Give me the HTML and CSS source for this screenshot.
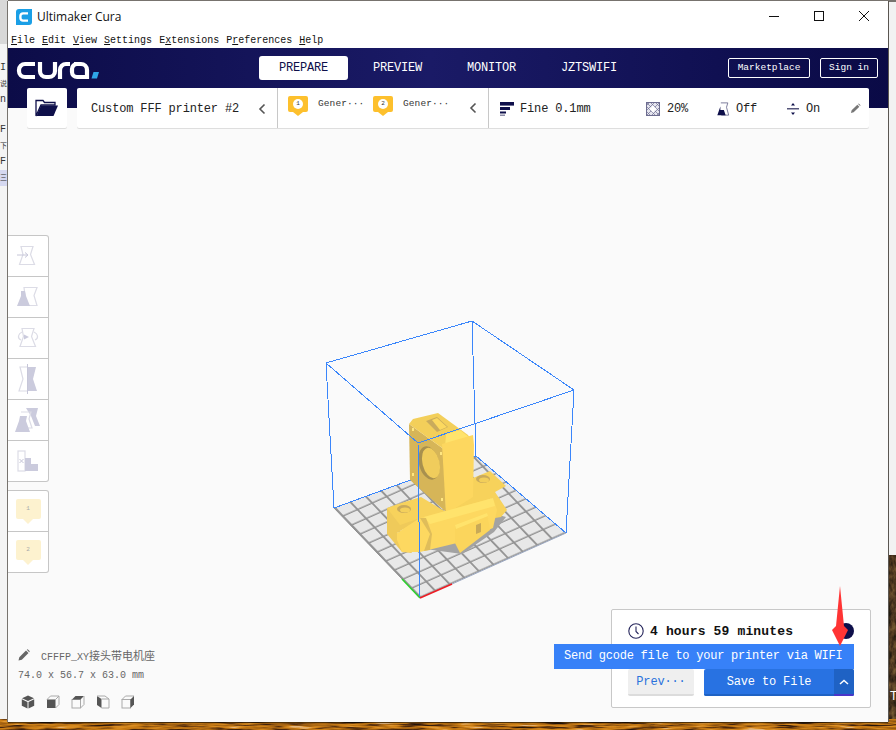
FILE: index.html
```html
<!DOCTYPE html>
<html lang="en">
<head>
<meta charset="utf-8">
<title>Ultimaker Cura</title>
<link rel="stylesheet" href="styles.css">
</head>
<body>
<svg class="desktop-art" viewBox="0 0 896 730" aria-hidden="true">
  <defs>
    <filter id="wood" x="0" y="0" width="100%" height="100%" color-interpolation-filters="sRGB">
      <feTurbulence type="fractalNoise" baseFrequency="0.035 0.45" numOctaves="3" seed="7"/>
      <feColorMatrix type="matrix" values="1.6 0 0 0 -0.3 1.6 0 0 0 -0.3 1.6 0 0 0 -0.3 0 0 0 0 1"/>
      <feComponentTransfer>
        <feFuncR type="table" tableValues="0.14 0.32 0.62 0.78 0.86 0.9"/>
        <feFuncG type="table" tableValues="0.08 0.17 0.37 0.48 0.56 0.72"/>
        <feFuncB type="table" tableValues="0.04 0.05 0.07 0.08 0.14 0.5"/>
      </feComponentTransfer>
    </filter>
    <filter id="bark" x="0" y="0" width="100%" height="100%" color-interpolation-filters="sRGB">
      <feTurbulence type="fractalNoise" baseFrequency="0.25 0.12" numOctaves="3" seed="3"/>
      <feColorMatrix type="matrix" values="1.6 0 0 0 -0.3 1.6 0 0 0 -0.3 1.6 0 0 0 -0.3 0 0 0 0 1"/>
      <feComponentTransfer>
        <feFuncR type="table" tableValues="0.12 0.24 0.36 0.46"/>
        <feFuncG type="table" tableValues="0.1 0.17 0.26 0.36"/>
        <feFuncB type="table" tableValues="0.06 0.1 0.15 0.2"/>
      </feComponentTransfer>
    </filter>
  </defs>
  <rect x="0" y="0" width="896" height="730" fill="#ececec"/>
  <rect x="0" y="0" width="896" height="2" fill="#77736e"/>
  <rect x="0" y="0" width="8" height="44" fill="#d8d8d8"/>
  <rect x="0" y="44" width="8" height="686" fill="#f4f4f4"/>
  <rect x="888" y="2" width="8" height="553" fill="#f2f2f2"/>
  <rect x="885" y="555" width="11" height="175" filter="url(#bark)"/>
  <rect x="0" y="719" width="896" height="11" filter="url(#wood)"/>
</svg>

<div class="left-scrap">
  <span class="scrap-line">I</span>
  <span class="scrap-line scrap-cjk">说</span>
  <span class="scrap-line">n</span>
  <span class="scrap-gap"></span>
  <span class="scrap-line">F</span>
  <span class="scrap-line scrap-cjk">下</span>
  <span class="scrap-line">F</span>
  <span class="scrap-line scrap-cjk scrap-sel">三</span>
</div>
<span class="right-scrap">T</span>

<main class="window">
  <div class="titlebar">
    <svg class="app-icon" viewBox="0 0 16 16" aria-hidden="true">
      <path d="M3 0h13v13a3 3 0 0 1-3 3H0V3a3 3 0 0 1 3-3z" fill="#1a9fe6"/>
      <path d="M12 4.400H7a2.600 2.600 0 0 0-2.600 2.600v2A2.600 2.600 0 0 0 7 11.600h5" fill="none" stroke="#fff" stroke-width="2.400"/>
    </svg>
    <span class="app-title">Ultimaker Cura</span>
    <div class="win-controls">
      <svg class="win-btn" viewBox="0 0 12 12" aria-hidden="true"><path d="M1 6.500h10" stroke="#111" fill="none"/></svg>
      <svg class="win-btn" viewBox="0 0 12 12" aria-hidden="true"><rect x="1.500" y="1.500" width="9" height="9" stroke="#111" fill="none"/></svg>
      <svg class="win-btn" viewBox="0 0 12 12" aria-hidden="true"><path d="M1 1l10 10M11 1L1 11" stroke="#111" fill="none"/></svg>
    </div>
  </div>

  <nav class="menubar">
    <span class="menu-item"><u>F</u>ile</span>
    <span class="menu-item"><u>E</u>dit</span>
    <span class="menu-item"><u>V</u>iew</span>
    <span class="menu-item"><u>S</u>ettings</span>
    <span class="menu-item">E<u>x</u>tensions</span>
    <span class="menu-item">P<u>r</u>eferences</span>
    <span class="menu-item"><u>H</u>elp</span>
  </nav>

  <header class="header">
    <svg class="logo" viewBox="0 0 84 20" aria-label="cura logo" role="img">
      <g fill="none" stroke="#fff" stroke-width="4.200">
        <path d="M19 4H9a6 6 0 0 0-6 6v1a6 6 0 0 0 6 6h10"/>
        <path d="M24 2v9a6 6 0 0 0 6 6h3a6 6 0 0 0 6-6V2"/>
        <path d="M44 19V10a6 6 0 0 1 6-6h4"/>
        <path d="M58 4h7a6 6 0 0 1 6 6v7h-10a5 5 0 0 1-5-5v-3a5 5 0 0 1 5-5"/>
      </g>
      <polygon points="77.500,12 83,12 81,18.500 75.500,18.500" fill="#2ea6e8"/>
    </svg>
    <div class="tabs">
      <span class="tab tab-active">PREPARE</span>
      <span class="tab">PREVIEW</span>
      <span class="tab">MONITOR</span>
      <span class="tab">JZTSWIFI</span>
    </div>
    <div class="account">
      <span class="acct-btn acct-market">Marketplace</span>
      <span class="acct-btn acct-sign">Sign in</span>
    </div>
  </header>

  <section class="stage">
    <svg class="scene" viewBox="8 108 880 614" aria-hidden="true">
      <defs>
        <pattern id="plate" width="10" height="10" patternUnits="userSpaceOnUse" patternTransform="matrix(1.46 -0.65 -0.86 -0.9 420 598)">
          <rect width="10" height="10" fill="#e8e8e8"/>
          <rect x="0" y="0" width="10" height="1.200" fill="#939393"/>
          <rect x="0" y="0" width="1.200" height="10" fill="#939393"/>
        </pattern>
      </defs>
      <polygon points="334,508 476,456 566,533 420,598" fill="url(#plate)"/>
      <g class="box-line">
        <path d="M326 363L472 321L574 390M472 321L476 456M334 508L476 456L566 533"/>
        <path d="M326 363L334 508M574 390L566 533"/>
      </g>
      <polygon points="418,548 462,554 494,532 506,517 495,514 440,540" fill="#a3a3a3"/>
      <!-- tower -->
      <polygon points="409,424 445,450 446,512 410,480" fill="#d6b558"/>
      <polygon points="409,424 413,419 438,413 468,435 473,443 445,450" fill="#f3cf5a"/>
      <polygon points="426,421 437,417 448,427 437,432" fill="#c9ab5c"/>
      <polygon points="432,420 437,418 447,427 440,430" fill="#fcd95f"/>
      <polygon points="446,434 460,430 470,438 445,448" fill="#ffe36c"/>
      <ellipse cx="429" cy="463" rx="10" ry="17" transform="rotate(-14 429 463)" fill="#a8904e"/>
      <ellipse cx="431" cy="463" rx="8.500" ry="15.500" transform="rotate(-14 431 463)" fill="#f0cc5c"/>
      <rect x="412" y="428" width="2" height="3" fill="#ffe680"/>
      <rect x="412" y="473" width="2" height="3" fill="#ffe680"/>
      <rect x="440" y="452" width="2" height="3" fill="#ffe680"/>
      <rect x="441" y="498" width="2" height="3" fill="#ffe680"/>
      <!-- right bracket -->
      <polygon points="446,514 473,478 490,471 506,486 495,492 507,510 501,517 495,518 493,498 470,506" fill="#f7d25b"/>
      <ellipse cx="483" cy="479" rx="7" ry="4" fill="#c9aa5c"/>
      <ellipse cx="484" cy="480" rx="5" ry="2.500" fill="#f2ce5a"/>
      <polygon points="473,435 474,445 473,497 446,514 442,444" fill="#fdd75f"/>
      <!-- base block -->
      <polygon points="387,508 398,504 421,497 446,512 420,525 400,530 387,515" fill="#f7d25c"/>
      <polygon points="387,508 387,534 402,552 412,553 402,535 397,533 420,518 400,525" fill="#efca5a"/>
      <ellipse cx="404" cy="509" rx="7" ry="4" fill="#c9aa5c"/>
      <ellipse cx="405" cy="510" rx="5" ry="2.500" fill="#f4d05c"/>
      <!-- cylinder -->
      <polygon points="397,533 420,518 493,498 497,510 493,528 457,543 420,552 402,552 397,540" fill="#fdd860"/>
      <polygon points="424,517 493,498 495,506 430,524" fill="#ffe36c"/>
      <polygon points="420,518 426,518 432,534 430,550 424,551 430,534" fill="#dfbd5a"/>
      <!-- front block -->
      <polygon points="455,525 487,513 490,530 460,553 455,543" fill="#fbd55c"/>
      <polygon points="455,525 487,513 488,516 456,529" fill="#ffe36c"/>
      <polygon points="476,525 481,523 481,532 476,534" fill="#c8a957"/>
      <g class="box-line">
        <path d="M326 363L418 443L574 390M418 443L420 598"/>
      </g>
      <path d="M334 508L402 579" class="plate-edge"/>
      <path d="M402 579L420 598" class="axis-green"/>
      <path d="M420 598L452 584" class="axis-red"/>
      <path d="M452 584L566 533" class="plate-edge-blue"/>
    </svg>

    <div class="toolbar-row">
      <button class="folder-btn" type="button" aria-label="Open file">
        <svg class="folder-icon" viewBox="0 0 24 18" aria-hidden="true">
          <path d="M1 17V1.500h7l1.500 2H20V6H6L1 17z" fill="none" stroke="#0e0f4a" stroke-width="1.300"/>
          <path d="M6 6.500h17L18.500 17H1.500z" fill="#0e0f4a"/>
        </svg>
      </button>
      <div class="toolbar">
        <div class="tb-printer">
          <span class="printer-name">Custom FFF printer #2</span>
          <svg class="chev" viewBox="0 0 8 12" aria-hidden="true"><path d="M6.500 1.500L2 6l4.500 4.500" fill="none" stroke="#555" stroke-width="1.600"/></svg>
        </div>
        <div class="tb-material">
          <div class="mat">
            <span class="mat-badge"><span class="mat-dot">1</span></span>
            <span class="mat-name">Gener···</span>
          </div>
          <div class="mat">
            <span class="mat-badge"><span class="mat-dot">2</span></span>
            <span class="mat-name">Gener···</span>
          </div>
          <svg class="chev chev-mat" viewBox="0 0 8 12" aria-hidden="true"><path d="M6.500 1.500L2 6l4.500 4.500" fill="none" stroke="#555" stroke-width="1.600"/></svg>
        </div>
        <div class="tb-settings">
          <div class="set set-quality">
            <svg class="set-icon" viewBox="0 0 14 14" aria-hidden="true">
              <rect x="0" y="0" width="14" height="3.600" fill="#0e0f4a"/>
              <rect x="0" y="5" width="10" height="3" fill="#0e0f4a"/>
              <rect x="0" y="9.500" width="6" height="2" fill="#0e0f4a"/>
              <rect x="0" y="12.500" width="5" height="1.500" fill="#8d8da8"/>
            </svg>
            <span>Fine 0.1mm</span>
          </div>
          <div class="set set-infill">
            <svg class="set-icon" viewBox="0 0 14 14" aria-hidden="true">
              <rect x=".5" y=".5" width="13" height="13" fill="#e5e5ee" stroke="#6d6d90"/>
              <path d="M0 4L4 0M0 9l9-9M0 14L14 0M5 14l9-9M10 14l4-4M0 4l10 10M0 0l14 14M4 0l10 10M0 9l5 5M9 0l5 5" stroke="#6d6d90" stroke-width=".7" fill="none"/>
              <rect x="4.500" y="4.500" width="5" height="5" transform="rotate(45 7 7)" fill="#fff"/>
            </svg>
            <span>20%</span>
          </div>
          <div class="set set-support">
            <svg class="set-icon" viewBox="0 0 14 16" aria-hidden="true">
              <path d="M4.500 1h8l-1.500 5 2.500 9H5" fill="none" stroke="#6d6d90"/>
              <path d="M4 5L0.500 15H10L8 9H4z" fill="#0e0f4a"/>
            </svg>
            <span>Off</span>
          </div>
          <div class="set set-adhesion">
            <svg class="set-icon-sm" viewBox="0 0 12 14" aria-hidden="true">
              <rect x="0" y="6" width="12" height="1.500" fill="#55557a"/>
              <path d="M6 1l2 2.500H4zM6 13l-2-2.500h4z" fill="#0e0f4a"/>
            </svg>
            <span>On</span>
          </div>
          <svg class="tb-pencil" viewBox="0 0 12 12" aria-hidden="true">
            <path d="M1 11l.8-3L8 1.800 10.200 4 4 10.200zM8.800 1l.8-.5 1.900 1.900-.5.800z" fill="#777"/>
          </svg>
        </div>
      </div>
    </div>

    <div class="side-tools side-tools-main">
      <div class="tool"><svg class="tool-icon" viewBox="0 0 22 22" aria-hidden="true"><path class="t-line" d="M4 1.500h12l-2.500 8 4 10h-15l3.500-10z"/><path class="t-line2" d="M0 10h10M8 7.500l3 2.500-3 2.500"/></svg></div>
      <div class="tool"><svg class="tool-icon" viewBox="0 0 22 22" aria-hidden="true"><path class="t-line" d="M7 1.500h13l-3 8 3 10H10l-2-10z"/><path class="t-fill" d="M4 5h4l1 5 4 10H0l4-10z"/></svg></div>
      <div class="tool"><svg class="tool-icon" viewBox="0 0 22 22" aria-hidden="true"><path class="t-line" d="M5 1.500h12l-2.500 8 4 10H3l3.500-10z"/><path class="t-line" d="M5 5C1 7 0 11 4 13M17 5c4 2 5 6 1 8"/><path class="t-fill" d="M7 7.500l5 2.500-5 2.500z"/></svg></div>
      <div class="tool"><svg class="tool-icon-tall" viewBox="0 0 22 30" aria-hidden="true"><path class="t-line" d="M11 3H3l3 12-4 12h9"/><path class="t-fill" d="M11 3h8l-3 12 4 12H11z"/><path class="t-line2" d="M10.500 0v30"/></svg></div>
      <div class="tool"><svg class="tool-icon tool-icon-lg" viewBox="0 0 26 26" aria-hidden="true"><path class="t-fill" d="M11 1h12l-2 8 4 10h-5l-4-10z"/><path class="t-line" d="M6 5h10l-2 7 3 9h-4"/><path class="t-fill" d="M5 9h7l-1 5 4 11H0l4-11z"/></svg></div>
      <div class="tool"><svg class="tool-icon" viewBox="0 0 22 22" aria-hidden="true"><rect class="t-line" x="1" y="1" width="7" height="20"/><path class="t-line2" d="M2.500 9l4 4M6.500 9l-4 4"/><path class="t-fill" d="M8 8h6v6h7v7H8z"/></svg></div>
    </div>
    <div class="side-tools side-tools-ext">
      <div class="tool"><span class="ext-badge">1</span></div>
      <div class="tool"><span class="ext-badge">2</span></div>
    </div>

    <div class="model-info">
      <div class="model-name">
        <svg class="pencil" viewBox="0 0 12 12" aria-hidden="true"><path d="M.500 11.500l.8-3.300L8 1.500 10.500 4 3.800 10.700zM8.800.8l.9-.6 2.100 2.100-.6.900z" fill="#666"/></svg>
        <span class="model-title">CFFFP_XY<span class="cjk">接头带电机座</span></span>
      </div>
      <div class="model-size">74.0 x 56.7 x 63.0 mm</div>
      <div class="view-icons">
        <svg class="view-icon" viewBox="0 0 14 14" aria-hidden="true"><path d="M7 .5l6 2.700L7 6 1 3.200z" fill="#555"/><path d="M.8 4.200L6.500 7v6.500L.8 10.800zM13.200 4.200L7.500 7v6.500l5.700-2.700z" fill="#555"/></svg>
        <svg class="view-icon" viewBox="0 0 14 14" aria-hidden="true"><path class="v-line" d="M1 4.500L4.500 1H13v8.500L9.500 13M9.500 4.500L13 1"/><rect x="1" y="4.500" width="8.500" height="8.500" fill="#555"/></svg>
        <svg class="view-icon" viewBox="0 0 14 14" aria-hidden="true"><rect class="v-line" x="1" y="4.500" width="8.500" height="8.500"/><path d="M1 4.500L4.500 1H13L9.500 4.500z" fill="#555"/><path class="v-line" d="M13 1v8.500L9.500 13"/></svg>
        <svg class="view-icon" viewBox="0 0 14 14" aria-hidden="true"><path d="M1 1l4.500 3v9L1 10z" fill="#555"/><path class="v-line" d="M1 1h8l4 3v9H5.500V4h7.500"/></svg>
        <svg class="view-icon" viewBox="0 0 14 14" aria-hidden="true"><rect class="v-line" x="1" y="4.500" width="8.500" height="8.500"/><path class="v-line" d="M1 4.500L4.500 1H13"/><path d="M13 1v8.500L9.500 13V4.500z" fill="#555"/></svg>
      </div>
    </div>

    <aside class="action-panel">
      <div class="time-row">
        <svg class="clock" viewBox="0 0 16 16" aria-hidden="true"><circle cx="8" cy="8" r="7.200" fill="none" stroke="#26265c" stroke-width="1.100"/><path d="M8 3.500V8.500l2.500 2.500" fill="none" stroke="#26265c" stroke-width="1.100"/></svg>
        <span class="time-text">4 hours 59 minutes</span>
        <span class="info-dot"></span>
      </div>
      <div class="action-row">
        <button class="btn-preview" type="button">Prev···</button>
        <div class="btn-save">
          <span class="save-label">Save to File</span>
          <span class="save-more"><svg class="up-chev" viewBox="0 0 10 6" aria-hidden="true"><path d="M1 5l4-3.500L9 5" fill="none" stroke="#fff" stroke-width="1.500"/></svg></span>
        </div>
      </div>
      <div class="tooltip">Send gcode file to your printer via WIFI</div>
      <svg class="red-arrow" viewBox="0 0 16 60" aria-hidden="true"><polygon points="8,0 12,40 16,44 8,60 0,44 4,40" fill="#ff3434"/></svg>
    </aside>
  </section>
</main>
</body>
</html>
```

FILE: styles.css
```css
* { box-sizing: border-box; }

html, body {
  margin: 0;
  padding: 0;
  width: 896px;
  height: 730px;
  overflow: hidden;
}

body {
  position: relative;
  font-family: "Liberation Mono", "Noto Sans CJK SC", monospace;
  background: #ececec;
  color: #222;
}

.desktop-art {
  position: absolute;
  left: 0;
  top: 0;
  width: 896px;
  height: 730px;
}

.left-scrap {
  position: absolute;
  left: 0;
  top: 60px;
  width: 7px;
  display: flex;
  flex-direction: column;
  font-size: 10px;
  line-height: 16px;
  color: #333;
}

.scrap-line { display: block; height: 16px; }
.scrap-cjk { font-size: 7px; }
.scrap-gap { display: block; height: 14px; }
.scrap-sel { background: #d5d8f0; }

.right-scrap {
  position: absolute;
  left: 890px;
  top: 689px;
  font-family: "Liberation Sans", sans-serif;
  font-size: 12px;
  color: #fff;
}

.window {
  position: absolute;
  left: 8px;
  top: 1px;
  width: 880px;
  height: 721px;
  display: flex;
  flex-direction: column;
  background: #fafafa;
  box-shadow: -1px 0 0 #77736e, 1px 0 0 #5a5651, 0 1px 1px rgba(0, 0, 0, .6);
}

.titlebar {
  height: 31px;
  flex: none;
  display: flex;
  align-items: center;
  background: #fff;
  padding-left: 8px;
}

.app-icon { width: 16px; height: 16px; margin-top: 1px; }

.app-title {
  margin-left: 5px;
  font-family: "Open Sans", sans-serif;
  font-size: 12px;
  color: #111;
}

.win-controls {
  margin: -2px 18px 0 auto;
  display: flex;
  gap: 33px;
}

.win-btn { width: 12px; height: 12px; display: block; }

.menubar {
  height: 16px;
  flex: none;
  display: flex;
  align-items: center;
  gap: 7px;
  padding-left: 3px;
  background: #fff;
  font-size: 10px;
  color: #111;
}

.header {
  height: 60px;
  flex: none;
  display: flex;
  align-items: flex-start;
  background: linear-gradient(90deg, #0c0c48 0%, #1a1a66 48%, #0a0a46 100%);
  position: relative;
}

.logo {
  width: 84px;
  height: 20px;
  margin: 12px 0 0 8px;
  flex: none;
}

.tabs {
  display: flex;
  align-items: center;
  margin: 8px 0 0 159px;
  height: 24px;
  font-size: 12px;
  letter-spacing: -0.2px;
  color: #fff;
}

.tab { margin-left: 25px; width: 49px; height: 24px; line-height: 25px; white-space: nowrap; }
.tab:nth-child(3) { margin-left: 45px; }
.tab:nth-child(4) { margin-left: 45px; width: 56px; }

.tab-active {
  margin-left: 0;
  width: 89px;
  text-align: center;
  background: #fff;
  color: #0e0f4a;
  border-radius: 3px;
}

.account {
  display: flex;
  gap: 10px;
  margin: 10px 0 0 auto;
  padding-right: 10px;
}

.acct-btn {
  height: 20px;
  line-height: 18px;
  border: 1px solid #fff;
  border-radius: 2px;
  font-size: 9.5px;
  text-align: center;
  color: #fff;
}

.acct-market { width: 82px; }
.acct-sign { width: 58px; }

.stage {
  position: relative;
  flex: 1;
  min-height: 0;
}

.scene {
  position: absolute;
  left: 0;
  top: 0;
  width: 880px;
  height: 614px;
}

.box-line path {
  fill: none;
  stroke: #3a86fb;
  stroke-width: 1;
  shape-rendering: crispEdges;
}

.plate-edge { fill: none; stroke: #8e8e8e; }
.plate-edge-blue { fill: none; stroke: #9aa7c0; }
.axis-green { fill: none; stroke: #2bd12b; stroke-width: 1.500; }
.axis-red { fill: none; stroke: #ee1c24; stroke-width: 1.500; }

.toolbar-row {
  position: relative;
  display: flex;
  gap: 10px;
  margin: -20px 0 0 19px;
  height: 40px;
}

.folder-btn {
  width: 40px;
  height: 40px;
  padding: 0;
  border: 0;
  border-radius: 2px;
  background: #fff;
  box-shadow: 0 1px 0 #dedede;
  display: flex;
  align-items: center;
  justify-content: center;
}

.folder-icon { width: 24px; height: 18px; }

.toolbar {
  width: 792px;
  height: 40px;
  display: flex;
  background: #fff;
  border-radius: 2px;
  box-shadow: 0 1px 0 #dedede;
  font-size: 12px;
  letter-spacing: -0.15px;
  color: #222;
}

.tb-printer {
  width: 201px;
  display: flex;
  align-items: center;
  padding: 1px 0 0 14px;
  border-right: 1px solid #c8c8c8;
}

.printer-name { width: 167px; white-space: nowrap; }

.chev { width: 8px; height: 12px; flex: none; }

.tb-material {
  width: 211px;
  display: flex;
  align-items: center;
  padding-left: 10px;
  border-right: 1px solid #c8c8c8;
}

.mat { display: flex; width: 85px; align-items: flex-start; }

.mat-badge {
  position: relative;
  width: 20px;
  height: 16px;
  margin-top: -4px;
  margin-bottom: 4px;
  background: #fdc02d;
  border-radius: 2px;
  display: flex;
  align-items: center;
  justify-content: center;
}

.mat-badge::after {
  content: "";
  position: absolute;
  left: 5px;
  top: 16px;
  border-left: 5px solid transparent;
  border-right: 5px solid transparent;
  border-top: 4px solid #fdc02d;
}

.mat-dot {
  width: 10px;
  height: 10px;
  border-radius: 50%;
  background: #fff;
  font-size: 6px;
  line-height: 10px;
  text-align: center;
  color: #333;
}

.mat-name {
  margin: -2px 0 0 10px;
  font-size: 9.500px;
  letter-spacing: .1px;
  color: #333;
  white-space: nowrap;
}

.chev-mat { margin-left: 11px; }

.tb-settings {
  flex: 1;
  display: flex;
  align-items: center;
  padding-top: 1px;
}

.set { display: flex; align-items: center; white-space: nowrap; }
.set-quality { margin-left: 11px; width: 146px; gap: 6px; }
.set-infill { width: 70px; gap: 7px; }
.set-support { width: 71px; gap: 6px; }
.set-adhesion { width: 63px; gap: 7px; }

.set-icon { width: 14px; height: 14px; flex: none; }
.set-icon-sm { width: 12px; height: 14px; flex: none; }
.tb-pencil { width: 11px; height: 11px; }

.side-tools {
  position: absolute;
  left: 0;
  width: 41px;
  display: flex;
  flex-direction: column;
  background: #fff;
  border: 1px solid #c6c6c6;
  border-left: 0;
  border-radius: 0 3px 3px 0;
}

.side-tools-main { top: 127px; }
.side-tools-ext { top: 382px; }

.tool {
  height: 41px;
  display: flex;
  align-items: center;
  justify-content: center;
  border-bottom: 1px solid #c6c6c6;
}

.tool:last-child { border-bottom: 0; height: 40px; }

.tool-icon { width: 22px; height: 22px; }
.tool-icon-tall { width: 22px; height: 30px; }
.tool-icon-lg { width: 26px; height: 30px; }

.t-line { fill: none; stroke: #dcdce6; stroke-width: 1.200; }
.t-line2 { fill: none; stroke: #c6c6d8; stroke-width: 1; }
.t-fill { fill: #cbcbdd; }

.ext-badge {
  position: relative;
  width: 25px;
  height: 20px;
  margin-bottom: 4px;
  background: #fdf2cf;
  border-radius: 2px;
  font-size: 6px;
  line-height: 20px;
  text-align: center;
  color: #aaa;
}

.ext-badge::after {
  content: "";
  position: absolute;
  left: 7px;
  top: 20px;
  border-left: 5px solid transparent;
  border-right: 5px solid transparent;
  border-top: 5px solid #fdf2cf;
}

.model-info {
  position: absolute;
  left: 10px;
  top: 539px;
  font-size: 10px;
  color: #666;
}

.model-name {
  display: flex;
  align-items: center;
  height: 16px;
}

.pencil { width: 12px; height: 12px; }
.model-title { margin-left: 11px; white-space: nowrap; }
.cjk { font-size: 11px; }

.model-size { margin-top: 6px; height: 14px; line-height: 14px; }

.view-icons {
  display: flex;
  gap: 11px;
  margin: 12px 0 0 3px;
}

.view-icon { width: 14px; height: 14px; }
.v-line { fill: none; stroke: #aaa; stroke-width: 1; }

.action-panel {
  position: absolute;
  left: 603px;
  top: 501px;
  width: 260px;
  height: 99px;
  border: 1px solid #c8c8c8;
  border-radius: 2px;
  background: #fff;
}

.time-row {
  display: flex;
  align-items: center;
  height: 18px;
  margin: 12px 0 0 16px;
}

.clock { width: 16px; height: 16px; flex: none; }

.time-text {
  margin-left: 6px;
  font-size: 13px;
  font-weight: 700;
  letter-spacing: .15px;
  color: #111;
  white-space: nowrap;
}

.info-dot {
  width: 16px;
  height: 16px;
  margin-left: 45px;
  border-radius: 50%;
  background: #0e0f4a;
}

.action-row {
  display: flex;
  margin: 29px 0 0 16px;
  gap: 10px;
}

.btn-preview {
  width: 66px;
  height: 27px;
  padding: 0;
  border: 0;
  border-bottom: 2px solid #dcdcdc;
  border-radius: 2px;
  background: #efefef;
  font-family: inherit;
  font-size: 12px;
  letter-spacing: -0.15px;
  color: #2a72dc;
}

.btn-save {
  width: 150px;
  height: 27px;
  display: flex;
  border-radius: 2px;
  overflow: hidden;
  background: #2872e2;
  font-size: 12px;
  letter-spacing: -0.15px;
  color: #fff;
}

.save-label {
  width: 130px;
  line-height: 26px;
  text-align: center;
  border-bottom: 2px solid #1f62c4;
}

.save-more {
  width: 20px;
  background: #1f62c4;
  border-bottom: 2px solid #4a35c8;
  display: flex;
  align-items: center;
  justify-content: center;
}

.up-chev { width: 10px; height: 6px; }

.tooltip {
  position: absolute;
  left: -58px;
  top: 34px;
  width: 300px;
  height: 25px;
  line-height: 25px;
  padding-left: 10px;
  background: #3781f8;
  font-size: 12px;
  letter-spacing: -0.24px;
  color: #fff;
  white-space: nowrap;
}

.red-arrow {
  position: absolute;
  left: 220px;
  top: -24px;
  width: 16px;
  height: 60px;
}
```
